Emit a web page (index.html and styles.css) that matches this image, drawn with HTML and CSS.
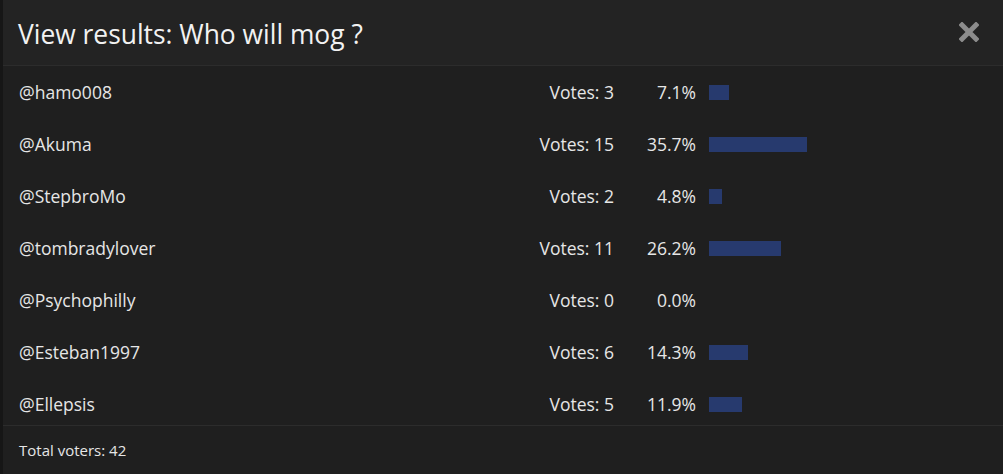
FILE: index.html
```html
<!DOCTYPE html>
<html>
<head>
<meta charset="utf-8">
<link rel="stylesheet" href="styles.css">
</head>
<body>
<div class="modal">
  <div class="header">
    <h1 class="title">View results: Who will mog ?</h1>
    <span class="close" aria-label="Close">
      <svg width="20" height="20" viewBox="0 0 20 20"><path d="M3 3 L17 17 M17 3 L3 17" stroke="#8c8c8c" stroke-width="5" stroke-linecap="square"/></svg>
    </span>
  </div>
  <div class="results">
    <div class="row"><span class="name">@hamo008</span><span class="votes">Votes: 3</span><span class="pct">7.1%</span><span class="barcell"><span class="bar" style="width:7.1%"></span></span></div>
    <div class="row"><span class="name">@Akuma</span><span class="votes">Votes: 15</span><span class="pct">35.7%</span><span class="barcell"><span class="bar" style="width:35.7%"></span></span></div>
    <div class="row"><span class="name">@StepbroMo</span><span class="votes">Votes: 2</span><span class="pct">4.8%</span><span class="barcell"><span class="bar" style="width:4.8%"></span></span></div>
    <div class="row"><span class="name">@tombradylover</span><span class="votes">Votes: 11</span><span class="pct">26.2%</span><span class="barcell"><span class="bar" style="width:26.2%"></span></span></div>
    <div class="row"><span class="name">@Psychophilly</span><span class="votes">Votes: 0</span><span class="pct">0.0%</span><span class="barcell"><span class="bar" style="width:0%"></span></span></div>
    <div class="row"><span class="name">@Esteban1997</span><span class="votes">Votes: 6</span><span class="pct">14.3%</span><span class="barcell"><span class="bar" style="width:14.3%"></span></span></div>
    <div class="row"><span class="name">@Ellepsis</span><span class="votes">Votes: 5</span><span class="pct">11.9%</span><span class="barcell"><span class="bar" style="width:11.9%"></span></span></div>
  </div>
  <div class="footer">Total voters: 42</div>
</div>
</body>
</html>
```
FILE: styles.css
```css
html, body {
  margin: 0;
  padding: 0;
  background: #161616;
  height: 100%;
}
body {
  font-family: "Open Sans", "Noto Sans", sans-serif;
  color: #e6e6e6;
}
.modal {
  margin-left: 3px;
  height: 474px;
  background: #1f1f1f;
  display: flex;
  flex-direction: column;
}
.header {
  height: 66px;
  box-sizing: border-box;
  background: #232323;
  border-bottom: 1px solid #2c2c2c;
  display: flex;
  align-items: center;
  justify-content: space-between;
  padding: 0 24px 0 15px;
}
.title {
  margin: 0;
  font-size: 26.4px;
  font-weight: 400;
  color: #f2f2f2;
  line-height: 1;
  margin-top: 4px;
}
.close {
  display: flex;
  width: 20px;
  height: 20px;
  margin-top: -1px;
}
.results {
  height: 359px;
}
.row {
  display: grid;
  grid-template-columns: 1fr 110px 82px 288px;
  height: 52px;
  align-items: center;
  padding: 0 19px 0 16px;
  font-size: 17.5px;
}
.name { color: #e6e6e6; }
.votes, .pct { text-align: right; }
.barcell {
  padding-left: 13px;
  display: flex;
}
.bar {
  display: block;
  height: 15px;
  background: #273a6e;
}
.footer {
  flex: 1;
  border-top: 1px solid #2c2c2c;
  display: flex;
  align-items: center;
  padding-left: 16px;
  font-size: 15px;
  color: #e6e6e6;
}
```
